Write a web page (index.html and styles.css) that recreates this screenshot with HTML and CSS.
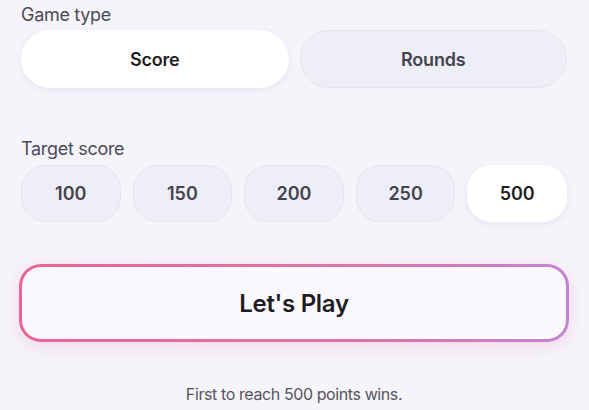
FILE: index.html
```html
<!DOCTYPE html>
<html lang="en">
<head>
<meta charset="UTF-8" />
<meta name="viewport" content="width=device-width, initial-scale=1" />
<title>New game</title>
<link rel="stylesheet" href="styles.css">
</head>
<body>

<div class="setup">
  <div class="field">
    <div class="label">Game type</div>
    <div class="segments">
      <button class="seg active">Score</button>
      <button class="seg">Rounds</button>
    </div>
  </div>

  <div class="field target">
    <div class="label">Target score</div>
    <div class="chips">
      <button class="chip">100</button>
      <button class="chip">150</button>
      <button class="chip">200</button>
      <button class="chip">250</button>
      <button class="chip active">500</button>
    </div>
  </div>

  <button class="play"><span>Let's Play</span></button>

  <p class="hint">First to reach 500 points wins.</p>
</div>

</body>
</html>
```

FILE: styles.css
```css
body {
  margin: 0;
  background: #f5f4fb;
  font-family: Inter, "Noto Sans", sans-serif;
  color: #1e1d24;
}
.setup {
  padding: 4px 22px 0 21px;
}
.label {
  font-size: 18px;
  color: #4b4a55;
  letter-spacing: -0.3px;
  height: 26px;
}
.segments {
  display: grid;
  grid-template-columns: 1fr 1fr;
  gap: 11px;
}
.seg {
  height: 58px;
  border-radius: 29px;
  border: 1px solid #e6e5ef;
  background: #eeeef7;
  font-family: inherit;
  font-size: 18px;
  font-weight: 600;
  color: #44434c;
  letter-spacing: -0.2px;
}
.seg.active {
  background: #fff;
  border-color: #fff;
  color: #1e1d24;
  box-shadow: 0 2px 6px rgba(60, 50, 110, 0.08);
}
.target {
  margin-top: 50px;
}
.target .label {
  height: 27px;
}
.chips {
  display: grid;
  grid-template-columns: repeat(5, 1fr);
  gap: 12px;
}
.chip {
  height: 57px;
  border-radius: 24px;
  border: 1px solid #e6e5ef;
  background: #eeeef7;
  font-family: inherit;
  font-size: 18px;
  font-weight: 600;
  color: #44434c;
}
.chip.active {
  background: #fff;
  border-color: #fff;
  color: #1e1d24;
  box-shadow: 0 2px 6px rgba(60, 50, 110, 0.08);
}
.play {
  display: block;
  width: calc(100% + 4px);
  margin: 42px -2px 0;
  height: 78px;
  padding: 3px;
  border: none;
  border-radius: 22px;
  background: linear-gradient(90deg, #ea6690, #dc74a8 60%, #c283d1);
  box-shadow: 0 4px 16px rgba(236, 110, 160, 0.22);
  font-family: inherit;
}
.play span {
  display: flex;
  align-items: center;
  justify-content: center;
  height: 100%;
  border-radius: 19px;
  background: #fbf8fd;
  font-size: 24px;
  font-weight: 600;
  color: #1e1d24;
  letter-spacing: -0.3px;
}
.hint {
  margin: 42px 0 0;
  text-align: center;
  font-size: 16px;
  color: #55545d;
  letter-spacing: -0.4px;
}
```
